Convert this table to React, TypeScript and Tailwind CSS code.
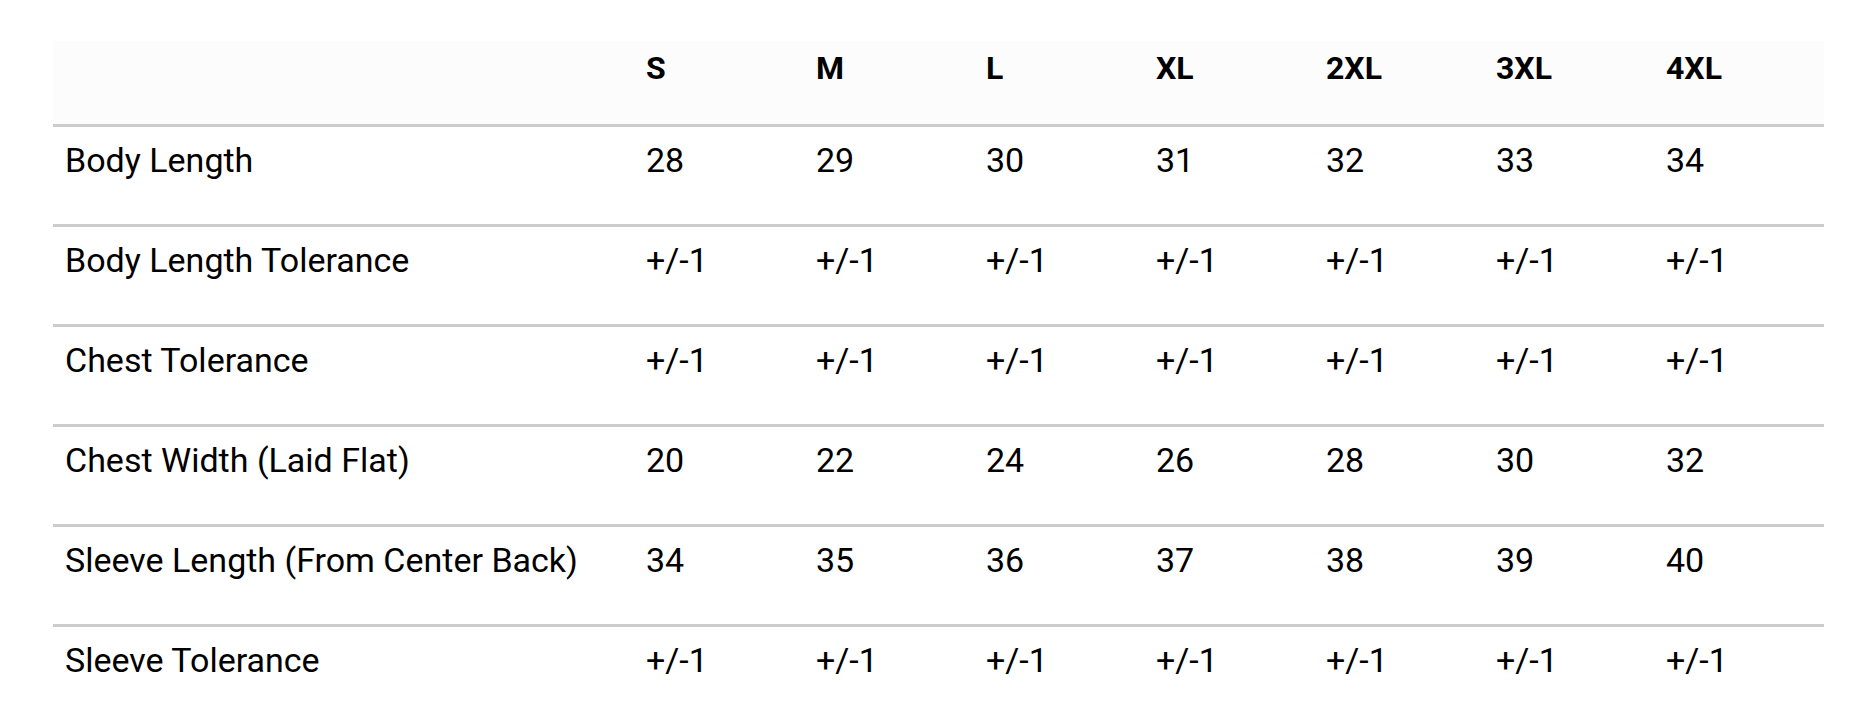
const sizes = ["S", "M", "L", "XL", "2XL", "3XL", "4XL"];

const rows: { label: string; values: string[] }[] = [
  { label: "Body Length", values: ["28", "29", "30", "31", "32", "33", "34"] },
  { label: "Body Length Tolerance", values: Array(7).fill("+/-1") },
  { label: "Chest Tolerance", values: Array(7).fill("+/-1") },
  { label: "Chest Width (Laid Flat)", values: ["20", "22", "24", "26", "28", "30", "32"] },
  { label: "Sleeve Length (From Center Back)", values: ["34", "35", "36", "37", "38", "39", "40"] },
  { label: "Sleeve Tolerance", values: Array(7).fill("+/-1") },
];

export default function App() {
  return (
    <div className="min-h-screen bg-white pt-[41px] pl-[53px] font-['Roboto',sans-serif] text-black">
      <table className="w-[1770px] table-fixed border-collapse text-[34px]">
        <colgroup>
          <col className="w-[581px]" />
          {sizes.map((s) => (
            <col key={s} className="w-[170px]" />
          ))}
        </colgroup>
        <thead>
          <tr className="bg-[#fcfcfc] border-b-[3px] border-[#cccccc]">
            <th className="h-[83px] px-3" />
            {sizes.map((s) => (
              <th
                key={s}
                className="px-3 pt-[7px] pb-[36px] text-left align-top text-[32px] font-bold leading-[40px]"
              >
                {s}
              </th>
            ))}
          </tr>
        </thead>
        <tbody>
          {rows.map((row, i) => (
            <tr
              key={row.label}
              className={i < rows.length - 1 ? "border-b-[3px] border-[#cccccc]" : ""}
            >
              <td className="h-[97px] px-3 pt-[13px] pb-[44px] align-top leading-[40px] whitespace-nowrap">
                {row.label}
              </td>
              {row.values.map((v, j) => (
                <td key={j} className="px-3 pt-[13px] pb-[44px] align-top leading-[40px]">
                  {v}
                </td>
              ))}
            </tr>
          ))}
        </tbody>
      </table>
    </div>
  );
}
